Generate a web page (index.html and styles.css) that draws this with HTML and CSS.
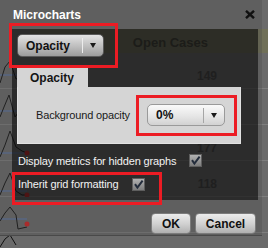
FILE: index.html
```html
<!DOCTYPE html>
<html>
<head>
<meta charset="utf-8">
<title>Microcharts</title>
<link rel="stylesheet" href="styles.css">
</head>
<body>
<div class="grid">
  <div class="grid-top"></div>
  <div class="grid-head"><span class="head-label">Open Cases</span></div>
  <div class="grid-row">
    <svg class="spark" width="30" height="36" viewBox="0 0 30 36"><line x1="0" y1="22" x2="27" y2="22" stroke="#5a7ab6" stroke-width="1"/><polyline points="0,30 5,14 10,8 16,26 22,24 27,27" fill="none" stroke="#111" stroke-width="1"/><circle cx="27" cy="27" r="2.5" fill="#d42020"/></svg>
    <span class="num">149</span>
  </div>
  <div class="grid-row">
    <svg class="spark" width="30" height="36" viewBox="0 0 30 36"><line x1="0" y1="22" x2="27" y2="22" stroke="#5a7ab6" stroke-width="1"/><polyline points="0,28 4,18 9,6 15,28 21,20 27,26" fill="none" stroke="#111" stroke-width="1"/><circle cx="27" cy="26" r="2.5" fill="#d42020"/></svg>
    <span class="num">163</span>
  </div>
  <div class="grid-row">
    <svg class="spark" width="30" height="36" viewBox="0 0 30 36"><line x1="0" y1="28" x2="27" y2="28" stroke="#5a7ab6" stroke-width="1"/><polyline points="0,32 5,20 10,6 16,22 22,26 27,28" fill="none" stroke="#111" stroke-width="1"/><circle cx="27" cy="28" r="2.5" fill="#d42020"/></svg>
    <span class="num">177</span>
  </div>
  <div class="grid-row">
    <svg class="spark" width="30" height="36" viewBox="0 0 30 36"><line x1="0" y1="30" x2="27" y2="30" stroke="#5a7ab6" stroke-width="1"/><polyline points="0,34 5,22 10,12 16,30 22,34 27,34" fill="none" stroke="#111" stroke-width="1"/><circle cx="27" cy="34" r="2.5" fill="#d42020"/></svg>
    <span class="num">118</span>
  </div>
  <div class="grid-row">
    <svg class="spark" width="30" height="36" viewBox="0 0 30 36"><line x1="0" y1="22" x2="27" y2="22" stroke="#5a7ab6" stroke-width="1"/><polyline points="0,24 5,16 10,10 16,18 18,32 27,30" fill="none" stroke="#111" stroke-width="1"/><circle cx="27" cy="27" r="2.5" fill="#d42020"/></svg>
  </div>
  <div class="grid-row">
    <svg class="spark" width="30" height="36" viewBox="0 0 30 36"><polyline points="0,14 5,6 10,2 16,12" fill="none" stroke="#111" stroke-width="1"/></svg>
  </div>
</div>

<div class="dialog">
  <div class="titlebar">
    <span class="title">Microcharts</span>
    <span class="close"><svg width="10" height="9" viewBox="0 0 10 9"><path d="M1 0.8 L9 8.2 M9 0.8 L1 8.2" stroke="#111" stroke-width="2.4" fill="none"/></svg></span>
  </div>
  <div class="body">
    <div class="select select-dark">
      <span class="select-label">Opacity</span>
      <span class="select-sep"></span>
      <span class="select-btn"><span class="arrow"></span></span>
    </div>
    <div class="tab">Opacity</div>
    <div class="tab-panel">
      <div class="field">
        <span class="field-label">Background opacity</span>
        <div class="select select-light">
          <span class="select-label">0%</span>
          <span class="select-sep"></span>
          <span class="select-btn"><span class="arrow"></span></span>
        </div>
      </div>
    </div>
    <div class="check-row first">
      <span class="check-label">Display metrics for hidden graphs</span>
      <svg class="checkbox" width="13" height="13" viewBox="0 0 13 13"><defs><linearGradient id="cb1" x1="0" y1="0" x2="0" y2="1"><stop offset="0" stop-color="#b4b4b4"/><stop offset="1" stop-color="#7a7a7a"/></linearGradient></defs><rect x="0.5" y="0.5" width="12" height="12" fill="url(#cb1)" stroke="#5e5e5e"/><path d="M3 6.2 L5.4 9.6 L10.6 2.6" fill="none" stroke="#242d3c" stroke-width="2"/></svg>
    </div>
    <div class="check-row second">
      <span class="check-label">Inherit grid formatting</span>
      <svg class="checkbox" width="13" height="13" viewBox="0 0 13 13"><defs><linearGradient id="cb2" x1="0" y1="0" x2="0" y2="1"><stop offset="0" stop-color="#b4b4b4"/><stop offset="1" stop-color="#7a7a7a"/></linearGradient></defs><rect x="0.5" y="0.5" width="12" height="12" fill="url(#cb2)" stroke="#5e5e5e"/><path d="M3 6.2 L5.4 9.6 L10.6 2.6" fill="none" stroke="#242d3c" stroke-width="2"/></svg>
    </div>
  </div>
  <div class="footer">
    <button class="btn btn-ok">OK</button>
    <button class="btn btn-cancel">Cancel</button>
  </div>
  <div class="mark mark-select"></div>
  <div class="mark mark-opacity"></div>
  <div class="mark mark-inherit"></div>
</div>
</body>
</html>
```

FILE: styles.css
```css
* {
  box-sizing: border-box;
  margin: 0;
  padding: 0;
}

html,
body {
  width: 268px;
  height: 248px;
  overflow: hidden;
}

body {
  position: relative;
  background: #6a6a6a;
  font-family: "Liberation Sans", Arial, sans-serif;
  font-size: 11px;
  color: #f0f0f0;
}

/* underlying grid */
.grid {
  width: 268px;
  height: 248px;
  overflow: hidden;
  display: flex;
  flex-direction: column;
  background: #6a6a6a;
}

.grid-top {
  flex: none;
  height: 29px;
}

.grid-head {
  flex: none;
  height: 24px;
  margin-left: 30px;
  padding: 3px 60px 0 0;
  display: flex;
  align-items: center;
  justify-content: flex-end;
  background: #707058;
}

.head-label {
  font-weight: bold;
  font-size: 13px;
  color: #38382e;
}

.grid-row {
  flex: none;
  height: 36px;
  display: flex;
  align-items: flex-start;
  border-bottom: 1px solid #7e7e7e;
}

.spark {
  flex: none;
  display: block;
}

.num {
  margin: 16px 51px 0 auto;
  font-weight: bold;
  font-size: 12px;
  line-height: 14px;
  color: #444;
}

/* dialog overlay */
.dialog {
  position: absolute;
  left: 0;
  top: 0;
  width: 262px;
  height: 236px;
  display: flex;
  flex-direction: column;
  background: rgba(69, 69, 69, 0.3);
  border-bottom: 1px solid #494949;
}

.titlebar {
  flex: none;
  height: 29px;
  display: flex;
  align-items: center;
  justify-content: space-between;
  padding: 0 7px 0 13px;
}

.title {
  font-weight: bold;
  font-size: 12px;
  color: #fff;
}

.close {
  display: flex;
  width: 10px;
  height: 9px;
  margin-top: -1px;
}

.body {
  flex: none;
  width: 246px;
  height: 171px;
  margin-left: 12px;
  padding: 5px 0 0 5px;
  display: flex;
  flex-direction: column;
  align-items: flex-start;
  background: rgba(2, 2, 2, 0.55);
}

/* select */
.select {
  display: flex;
  align-items: center;
  border-radius: 5px;
  color: #111;
  font-weight: bold;
  font-size: 12px;
}

.select-dark {
  width: 87px;
  height: 23px;
  border: 1px solid #5a5a5a;
  background: linear-gradient(#e4e4e4, #bdbdbd 55%, #9c9c9c);
}

.select-light {
  width: 78px;
  height: 22px;
  border: 1px solid #9a9a9a;
  background: linear-gradient(#fafafa, #e6e6e6 55%, #d2d2d2);
}

.select-label {
  flex: 1;
  padding-left: 8px;
}

.select-sep {
  width: 1px;
  height: 15px;
}

.select-dark .select-sep {
  background: #ececec;
}

.select-light .select-sep {
  background: #a6a6a6;
}

.select-btn {
  width: 20px;
  display: flex;
  justify-content: center;
  align-items: center;
}

.arrow {
  width: 0;
  height: 0;
  border-left: 3.5px solid transparent;
  border-right: 3.5px solid transparent;
  border-top: 5px solid #1a1a1a;
}

/* tabs */
.tab {
  margin-top: 9px;
  width: 71px;
  height: 21px;
  padding: 5px 0 0 13px;
  background: #d5d5d5;
  color: #151515;
  font-weight: bold;
  font-size: 12px;
}

.tab-panel {
  width: 224px;
  height: 57px;
  padding: 17px 0 0 18px;
  background: #d5d5d5;
  border: 1px solid #e2e2e2;
  border-top: none;
}

.field {
  display: flex;
  align-items: center;
}

.field-label {
  width: 111px;
  color: #1a1a1a;
  font-size: 11px;
  letter-spacing: -0.15px;
}

/* checkboxes */
.check-row {
  display: flex;
  align-items: center;
  padding-left: 1px;
}

.check-row.first {
  margin-top: 5px;
  height: 23px;
}

.check-row.second {
  height: 24px;
}

.check-label {
  color: #f2f2f2;
  letter-spacing: -0.15px;
}

.checkbox {
  display: block;
  margin-left: 13px;
}

/* footer */
.footer {
  flex: 1;
  display: flex;
  justify-content: flex-end;
  align-items: flex-start;
  gap: 4px;
  padding: 13px 6px 0 0;
}

.btn {
  height: 21px;
  border: 1px solid #7c7c7c;
  border-radius: 4px;
  background: linear-gradient(#ececec, #cfcfcf 55%, #b0b0b0);
  font-family: "Liberation Sans", Arial, sans-serif;
  font-weight: bold;
  font-size: 12px;
  color: #111;
}

.btn-ok {
  width: 40px;
}

.btn-cancel {
  width: 61px;
}

/* red annotation highlights */
.mark {
  position: absolute;
  border: 3px solid #ec1c24;
  pointer-events: none;
}

.mark-select {
  left: 9px;
  top: 23px;
  width: 109px;
  height: 45px;
}

.mark-opacity {
  left: 136px;
  top: 95px;
  width: 101px;
  height: 41px;
}

.mark-inherit {
  left: 12px;
  top: 172px;
  width: 150px;
  height: 33px;
}
```
